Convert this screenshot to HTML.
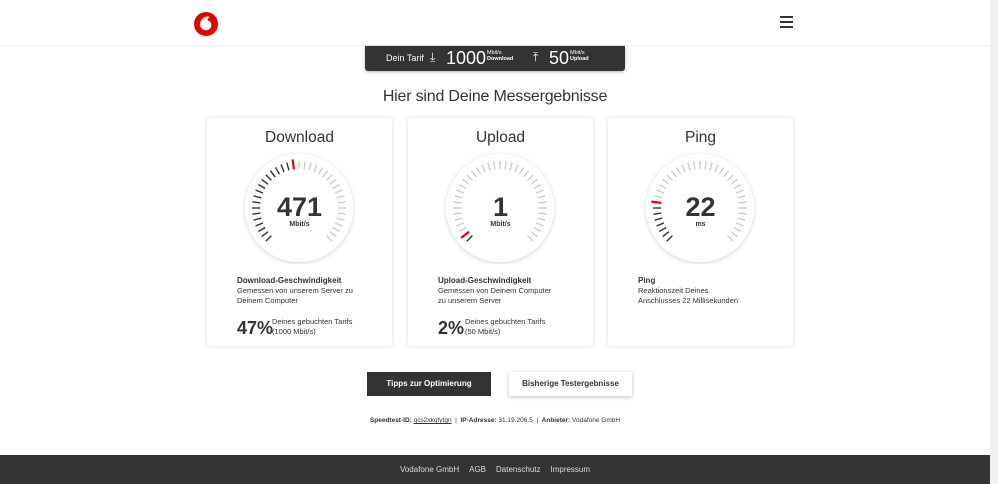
<!DOCTYPE html><html><head><meta charset="utf-8"><style>
*{margin:0;padding:0;box-sizing:border-box}
body{width:998px;height:484px;overflow:hidden;background:#fff;font-family:"Liberation Sans",sans-serif;color:#333;position:relative}
.hdr{position:absolute;left:0;top:0;width:990px;height:46px;border-bottom:1px solid #eee}
.sb{position:absolute;right:0;top:0;width:8px;height:484px;background:#f1f1f1}
.tarif{position:absolute;left:365px;top:46px;width:260px;height:25px;background:#333;border-radius:0 0 3px 3px;color:#fff;box-shadow:0 1px 3px rgba(0,0,0,.3)}
.tarif span{position:absolute}
h1{position:absolute;top:88px;left:0;width:990px;text-align:center;font-weight:normal;font-size:16px;color:#333;letter-spacing:-.2px}
.card{position:absolute;top:118px;width:185px;height:228px;background:#fff;border-radius:3px;box-shadow:0 0 5px rgba(0,0,0,.15)}
.card .t{position:absolute;top:11px;width:100%;text-align:center;font-size:15.5px}
.card svg{position:absolute;left:36px;top:34px}
.big{position:absolute;top:74px;width:100%;text-align:center;font-size:27px;font-weight:bold;color:#333}
.unit{position:absolute;top:103px;width:100%;text-align:center;font-size:7px;font-weight:bold}
.lab{position:absolute;left:30px;top:158px;font-size:8px;font-weight:bold}
.desc{position:absolute;left:30px;top:168px;font-size:7.5px;line-height:10px;width:118px}
.pct{position:absolute;left:30px;top:200px;font-size:18px;font-weight:bold}
.pd{position:absolute;left:65px;top:199px;font-size:7.5px;line-height:10px}
.btn{position:absolute;top:372px;height:24px;font-size:8px;font-weight:bold;text-align:center;line-height:24px}
.meta{position:absolute;top:417px;left:0;width:990px;text-align:center;font-size:6.5px}
.ft{position:absolute;left:0;top:455px;width:990px;height:29px;background:#333;color:#ddd;font-size:8px;text-align:center;line-height:29px}
.ft span{margin:0 5px}
</style></head><body>
<div class="hdr">
<svg style="position:absolute;left:194px;top:12px" width="24" height="24" viewBox="0 0 24 24"><circle cx="12" cy="12" r="12" fill="#e60000"/><path d="M13 4.5c-3.6.4-7 3.4-7 7.8 0 3.4 2.5 6 5.8 6 3.2 0 5.6-2.4 5.6-5.3 0-2.8-1.8-4.1-3.9-4.6 0-1.8 1.1-2.9 2.6-3.3-.9-.5-1.9-.7-3.1-.6z" fill="#fff"/></svg>
<div style="position:absolute;left:780px;top:16px;width:13px;height:1.5px;background:#333;box-shadow:0 5px 0 #333,0 10px 0 #333"></div>
</div>
<div class="sb"></div>
<div class="tarif">
<span style="left:21px;top:7px;font-size:9px">Dein Tarif</span>
<span style="left:65px;top:4px;font-size:12px">⤓</span>
<span style="left:81px;top:2px;font-size:18px">1000</span>
<span style="left:122px;top:4px;font-size:5.5px;line-height:6px">Mbit/s<br><b>Download</b></span>
<span style="left:168px;top:4px;font-size:12px">⤒</span>
<span style="left:184px;top:2px;font-size:18px">50</span>
<span style="left:205px;top:4px;font-size:5.5px;line-height:6px">Mbit/s<br><b>Upload</b></span>
</div>
<h1>Hier sind Deine Messergebnisse</h1>

<div class="card" style="left:207px"><div class="t">Download</div><svg width="112" height="112" data-v="0.47"></svg>
<div class="big">471</div><div class="unit">Mbit/s</div>
<div class="lab">Download-Geschwindigkeit</div><div class="desc">Gemessen von unserem Server zu Deinem Computer</div>
<div class="pct">47%</div><div class="pd">Deines gebuchten Tarifs<br>(1000 Mbit/s)</div></div>

<div class="card" style="left:408px"><div class="t">Upload</div><svg width="112" height="112" data-v="0.02"></svg>
<div class="big">1</div><div class="unit">Mbit/s</div>
<div class="lab">Upload-Geschwindigkeit</div><div class="desc">Gemessen von Deinem Computer zu unserem Server</div>
<div class="pct">2%</div><div class="pd" style="left:57px">Deines gebuchten Tarifs<br>(50 Mbit/s)</div></div>

<div class="card" style="left:608px"><div class="t">Ping</div><svg width="112" height="112" data-v="0.2"></svg>
<div class="big">22</div><div class="unit">ms</div>
<div class="lab">Ping</div><div class="desc" style="width:110px">Reaktionszeit Deines Anschlusses 22 Millisekunden</div></div>

<div class="btn" style="left:367px;width:124px;background:#333;color:#fff">Tipps zur Optimierung</div>
<div class="btn" style="left:509px;width:123px;background:#fff;box-shadow:0 1px 4px rgba(0,0,0,.25)">Bisherige Testergebnisse</div>
<div class="meta"><b>Speedtest-ID:</b> <u>qcs2xkqfytgn</u> &nbsp;|&nbsp; <b>IP-Adresse:</b> 31.19.206.5 &nbsp;|&nbsp; <b>Anbieter:</b> Vodafone GmbH</div>
<div class="ft"><span>Vodafone GmbH</span><span>AGB</span><span>Datenschutz</span><span>Impressum</span></div>
<script>
document.querySelectorAll('svg[data-v]').forEach(function(s){
var v=parseFloat(s.getAttribute('data-v')),h='<defs><filter id="f" x="-20%" y="-20%" width="140%" height="140%"><feDropShadow dx="0" dy="1" stdDeviation="2.5" flood-opacity=".18"/></filter></defs><circle cx="56" cy="56" r="54" fill="#fff" filter="url(#f)"/>';
var n=37,ri=Math.round(v*(n-1));
for(var i=0;i<n;i++){var a=(225+i*270/(n-1))*Math.PI/180,sx=Math.sin(a),cy=-Math.cos(a);
var c=i<ri?'#333':(i==ri?'#e60000':'#ccc'),w=i==ri?2.2:1.4;
h+='<line x1="'+(56+39*sx)+'" y1="'+(56+39*cy)+'" x2="'+(56+(i==ri?49:47)*sx)+'" y2="'+(56+(i==ri?49:47)*cy)+'" stroke="'+c+'" stroke-width="'+w+'"/>';}
s.innerHTML=h;});
</script>
</body></html>
